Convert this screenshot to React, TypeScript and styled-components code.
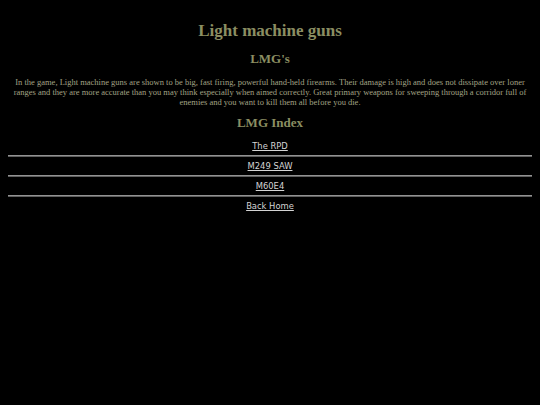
import React from "react";
import { createGlobalStyle, styled } from "styled-components";

const GlobalStyle = createGlobalStyle`
  html, body {
    background: #000;
  }
  body {
    margin: 8px;
    font-family: "Liberation Serif", "Times New Roman", serif;
  }
`;

const Page = styled.div`
  display: flex;
  flex-direction: column;
  align-items: stretch;
  text-align: center;
`;

const Title = styled.h1`
  margin: 13px 0 0;
  font-size: 17px;
  line-height: 19px;
  font-weight: bold;
  color: #8b8e62;
`;

const Heading = styled.h2<{ $top: number }>`
  margin: ${({ $top }) => $top}px 0 0;
  font-size: 13px;
  line-height: 15px;
  font-weight: bold;
  color: #8b8e62;
`;

const Intro = styled.p`
  margin: 11px 0 0;
  font-size: 8.5px;
  line-height: 10px;
  color: #a2a285;
`;

const Index = styled.ul`
  list-style: none;
  margin: 6.5px 0 0;
  padding: 0;
`;

const Item = styled.li<{ $first?: boolean }>`
  height: 18px;
  display: flex;
  align-items: center;
  justify-content: center;
  border-top: ${({ $first }) => ($first ? "none" : "1px solid #929292")};
  box-shadow: ${({ $first }) => ($first ? "none" : "inset 0 1px 0 #5e5e5e")};
  padding-top: ${({ $first }) => ($first ? "0" : "1px")};
`;

const Link = styled.a`
  font-family: "DejaVu Sans", Verdana, sans-serif;
  font-size: 8.4px;
  line-height: 10px;
  color: #d4d4d4;
  text-decoration: underline;
`;

const guns = ["The RPD", "M249 SAW", "M60E4", "Back Home"];

export default function App() {
  return (
    <Page>
      <GlobalStyle />
      <Title>Light machine guns</Title>
      <Heading $top={10.5}>LMG's</Heading>
      <Intro>
        In the game, Light machine guns are shown to be big, fast firing, powerful hand-held
        firearms. Their damage is high and does not dissipate over loner ranges and they are
        more accurate than you may think especially when aimed correctly. Great primary weapons
        for sweeping through a corridor full of enemies and you want to kill them all before
        you die.
      </Intro>
      <Heading $top={8.5}>LMG Index</Heading>
      <Index>
        {guns.map((name, i) => (
          <Item key={name} $first={i === 0}>
            <Link href="#">{name}</Link>
          </Item>
        ))}
      </Index>
    </Page>
  );
}
